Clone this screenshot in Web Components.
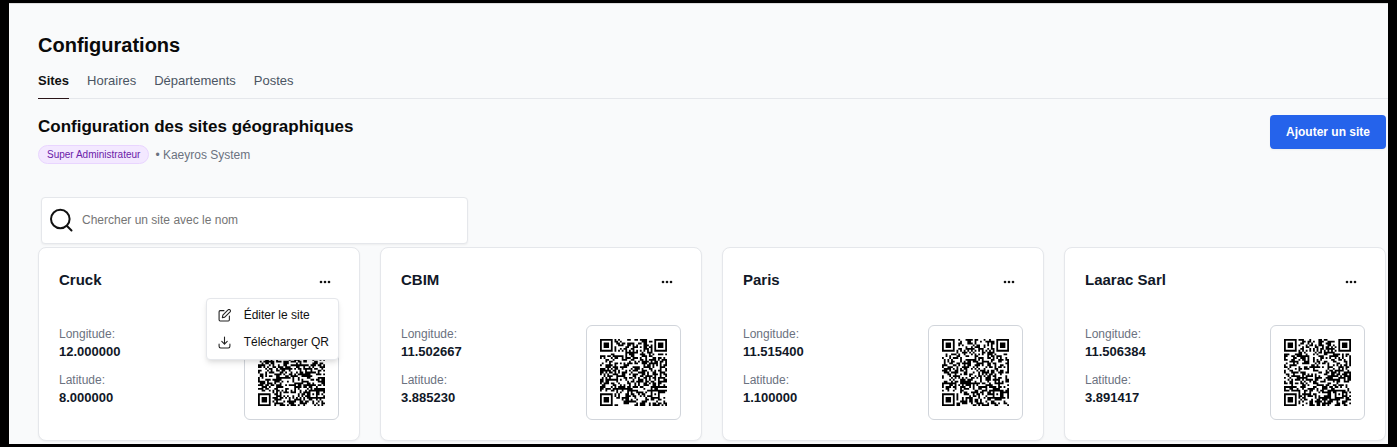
<!DOCTYPE html>
<html lang="fr">
<head>
<meta charset="utf-8">
<title>Configurations</title>
<style>
  body { margin: 0; background: #000; font-family: "Liberation Sans", Arial, sans-serif; color: #111; }
</style>
</head>
<body>
<config-page></config-page>
<script>
class Base extends HTMLElement {
  constructor() {
    super();
    this.attachShadow({ mode: "open" });
  }
  connectedCallback() { this.shadowRoot.innerHTML = this.render(); }
}

/* QR symbol, version 5 (37 modules), its data area filled from a seed. */
customElements.define("qr-code", class extends Base {
  render() {
    const n = 37;
    let s = Number(this.getAttribute("seed")) * 7919 + 17;
    const rnd = () => {
      s = (s + 0x6D2B79F5) | 0;
      let t = Math.imul(s ^ (s >>> 15), 1 | s);
      t = (t + Math.imul(t ^ (t >>> 7), 61 | t)) ^ t;
      return ((t ^ (t >>> 14)) >>> 0) / 4294967296;
    };
    const ring = (x, y, cx, cy) => Math.max(Math.abs(x - cx), Math.abs(y - cy));
    let d = "";
    for (let y = 0; y < n; y++) for (let x = 0; x < n; x++) {
      let on = rnd() < 0.5;
      if (x === 6 || y === 6) on = (x + y) % 2 === 0;
      const a = ring(x, y, 30, 30);
      if (a <= 2) on = a !== 1;
      for (const [cx, cy] of [[3, 3], [n - 4, 3], [3, n - 4]]) {
        const r = ring(x, y, cx, cy);
        if (r <= 4) on = r === 3 || r <= 1;
      }
      if (on) d += `M${x} ${y}h1v1h-1z`;
    }
    return `<style>:host{display:block;width:67px;height:67px}svg{display:block;width:100%;height:100%}</style>
      <svg viewBox="0 0 37 37" role="img" aria-label="QR"><path d="${d}" fill="#000"/></svg>`;
  }
});

customElements.define("tab-bar", class extends Base {
  render() {
    return `<style>
      :host{display:block}
      nav{display:flex;gap:18px;border-bottom:1px solid #e5e7eb}
      ::slotted(a){font-size:13px;line-height:16px;padding:0 0 9px;color:#4b5563;text-decoration:none;border-bottom:1px solid transparent;margin-bottom:-1px}
      ::slotted(a[aria-current]){font-weight:bold;color:#111;border-color:#2a1518}
    </style><nav><slot></slot></nav>`;
  }
});

customElements.define("role-badge", class extends Base {
  render() {
    return `<style>
      :host{display:block;font-size:10px;line-height:17px;padding:0 8px;border:1px solid #e9d5ff;border-radius:10px;background:#f3e8ff;color:#6b21a8}
    </style><slot></slot>`;
  }
});

customElements.define("primary-button", class extends Base {
  render() {
    return `<style>
      :host{display:block}
      button{font:bold 12px/16px "Liberation Sans",Arial,sans-serif;color:#fff;background:#2563eb;border:0;border-radius:4px;padding:9px 16px;box-shadow:0 1px 2px #0000000d;display:block}
    </style><button type="button"><slot></slot></button>`;
  }
});

customElements.define("search-box", class extends Base {
  render() {
    return `<style>
      :host{display:block;max-width:427px}
      label{box-sizing:border-box;display:flex;align-items:center;gap:8px;height:47px;padding:0 8px 2px;background:#fff;border:1px solid #e5e7eb;border-radius:4px;box-shadow:0 1px 2px #0000000d}
      svg{width:24px;height:24px;flex:none}
      input{flex:1;min-width:0;border:0;outline:0;padding:0;background:none;font:12px/16px "Liberation Sans",Arial,sans-serif;color:#111}
      input::placeholder{color:#757575}
    </style>
    <label>
      <svg viewBox="0 0 24 24" fill="none" stroke="#111" stroke-width="2" stroke-linecap="round"><circle cx="10.300" cy="11" r="9.300"/><path d="M17 18l4.500 4.500"/></svg>
      <input type="text" aria-label="Chercher un site avec le nom" placeholder="Chercher un site avec le nom">
    </label>`;
  }
});

customElements.define("site-menu", class extends Base {
  render() {
    return `<style>
      :host{display:block;box-sizing:border-box;background:#fff;border:1px solid #e5e7eb;border-radius:4px;padding:3px 0;box-shadow:0 4px 6px -1px #0000001a,0 2px 4px -1px #0000000f}
      button{display:flex;align-items:center;gap:13px;width:100%;border:0;background:none;padding:0 9px 0 11px;font:12px/27px "Liberation Sans",Arial,sans-serif;color:#111;white-space:nowrap;text-align:left}
      svg{width:13px;height:13px;flex:none}
    </style>
    <button type="button"><svg viewBox="0 0 24 24" fill="none" stroke="#222" stroke-width="2" stroke-linecap="round" stroke-linejoin="round"><path d="M11 3H4a2 2 0 0 0-2 2v15a2 2 0 0 0 2 2h15a2 2 0 0 0 2-2v-7"/><path d="M18.500 1.700a2.500 2.500 0 0 1 3.800 3.500L12.500 15 8 16l1-4.500z"/></svg>Éditer le site</button>
    <button type="button"><svg viewBox="0 0 24 24" fill="none" stroke="#222" stroke-width="2" stroke-linecap="round" stroke-linejoin="round"><path d="M2 15v4a3 3 0 0 0 3 3h14a3 3 0 0 0 3-3v-4M7 10l5 5 5-5M12 15V2"/></svg>Télécharger QR</button>`;
  }
});

customElements.define("site-card", class extends Base {
  render() {
    const a = k => this.getAttribute(k);
    return `<style>
      :host{display:block;background:#fff;border:1px solid #e5e7eb;border-radius:8px;padding:20px;box-shadow:0 1px 2px #0000000d}
      header{display:flex;justify-content:space-between;align-items:flex-start;position:relative}
      h3{margin:0;font-size:15px;line-height:24px;color:#111827}
      .more{display:grid;place-items:center;width:28px;height:28px;border:0;padding:0;background:none}
      .more svg{width:12px;height:4px}
      slot{position:absolute;z-index:1;top:30px;right:0;display:block}
      .body{display:flex;justify-content:space-between;align-items:flex-end;padding-top:29px}
      dl{margin:0;font-size:12px;line-height:18px;padding-bottom:13px}
      dt{color:#6b7280}
      dd{margin:0;font-size:13px;font-weight:bold;color:#111827}
      dd+dt{padding-top:10px}
      .qr{padding:13px;border:1px solid #d1d5db;border-radius:6px}
    </style>
    <header><h3>${a("name")}</h3>
      <button class="more" type="button" aria-label="Options"><svg viewBox="0 0 12 4" fill="#111"><circle cx="2" cy="2" r="1.300"/><circle cx="6" cy="2" r="1.300"/><circle cx="10" cy="2" r="1.300"/></svg></button>
      <slot></slot></header>
    <div class="body">
      <dl><dt>Longitude:</dt><dd>${a("lon")}</dd><dt>Latitude:</dt><dd>${a("lat")}</dd></dl>
      <div class="qr"><qr-code seed="${a("seed")}"></qr-code></div>
    </div>`;
  }
});

customElements.define("config-page", class extends Base {
  render() {
    return `<style>
      :host{display:block;margin:3px 9px;background:#f9fafb;border-top:1px solid #ddd;padding:29px 0 3px 29px}
      h1{margin:0;font-size:20px;line-height:24px;color:#0a0a0a}
      tab-bar{margin-top:16px}
      main{padding-right:2px}
      .head{display:flex;justify-content:space-between;align-items:flex-start;padding-top:16px}
      h2{margin:0;font-size:17px;line-height:24px;color:#0a0a0a}
      .who{display:flex;align-items:center;gap:6px;margin-top:6px;font-size:12px;line-height:16px;color:#6b7280}
      search-box{margin:33px 3px 3px}
      .grid{display:grid;grid-template-columns:repeat(4,minmax(0,1fr));gap:20px}
    </style>
    <h1>Configurations</h1>
    <tab-bar><a href="#sites" aria-current="page">Sites</a><a href="#horaires">Horaires</a><a href="#departements">Départements</a><a href="#postes">Postes</a></tab-bar>
    <main>
      <div class="head">
        <div><h2>Configuration des sites géographiques</h2>
          <div class="who"><role-badge>Super Administrateur</role-badge><span>• Kaeyros System</span></div></div>
        <primary-button>Ajouter un site</primary-button>
      </div>
      <search-box></search-box>
      <div class="grid">
        <site-card name="Cruck" lon="12.000000" lat="8.000000" seed="1"><site-menu></site-menu></site-card>
        <site-card name="CBIM" lon="11.502667" lat="3.885230" seed="2"></site-card>
        <site-card name="Paris" lon="11.515400" lat="1.100000" seed="3"></site-card>
        <site-card name="Laarac Sarl" lon="11.506384" lat="3.891417" seed="4"></site-card>
      </div>
    </main>`;
  }
});
</script>
</body>
</html>
